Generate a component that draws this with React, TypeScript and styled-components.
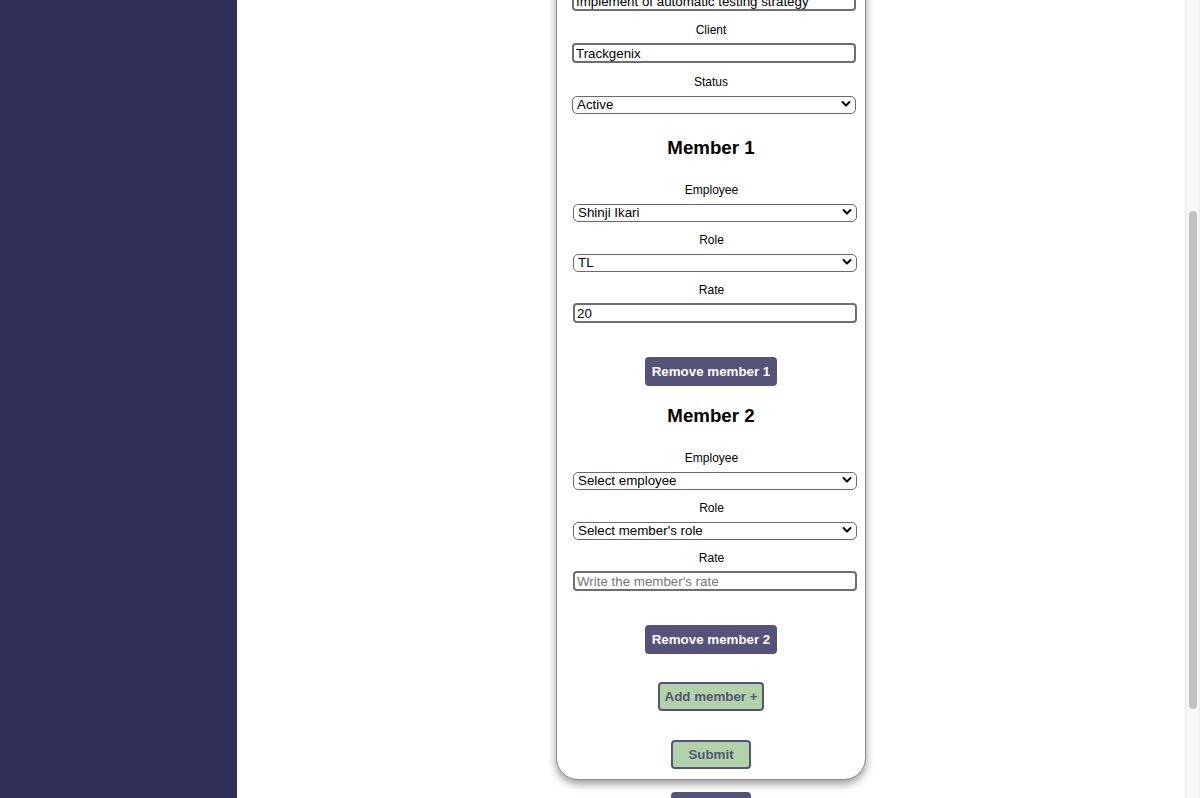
import React from "react";
import styled, { createGlobalStyle } from "styled-components";

const GlobalStyle = createGlobalStyle`
  html, body {
    margin: 0;
    padding: 0;
    height: 100%;
    overflow: hidden;
    font-family: "Liberation Sans", Arial, sans-serif;
  }
  * { box-sizing: border-box; }
`;

const Layout = styled.div`
  display: flex;
  width: 1200px;
  height: 798px;
  overflow: hidden;
  background: #ffffff;
`;

const Sidebar = styled.aside`
  width: 237px;
  flex: 0 0 237px;
  background: #322f58;
`;

const Main = styled.main`
  flex: 1;
  display: flex;
  flex-direction: column;
  align-items: center;
  overflow: hidden;
`;

const Card = styled.form`
  width: 310px;
  margin-top: -42px;
  padding: 12px 15px 10px;
  background: #ffffff;
  border: 1px solid #8c8c8c;
  border-radius: 22px;
  box-shadow: 0 4px 9px rgba(0, 0, 0, 0.4);
  display: flex;
  flex-direction: column;
  align-items: center;
`;

const Field = styled.div<{ $shift?: number }>`
  align-self: stretch;
  display: flex;
  flex-direction: column;
  margin-bottom: 12px;
  padding-left: ${(p) => p.$shift ?? 0}px;
`;

const Label = styled.label`
  display: block;
  text-align: center;
  font-size: 12px;
  line-height: 15px;
  margin-bottom: 5px;
  color: #000;
`;

const TextInput = styled.input`
  appearance: none;
  width: 284px;
  height: 20px;
  padding: 0 2px;
  border: 2px solid #6e6e6e;
  border-radius: 4px;
  font-family: "Liberation Sans", Arial, sans-serif;
  font-size: 13.33px;
  color: #000;
  background: #fff;
  outline: none;
  &::placeholder {
    color: #767676;
  }
`;

const SelectWrap = styled.div`
  position: relative;
  width: 284px;
  height: 18px;
`;

const Select = styled.select`
  appearance: none;
  width: 100%;
  height: 18px;
  padding: 0 20px 0 4px;
  border: 1px solid #6b6b6b;
  border-radius: 5px;
  background: #fff;
  font-family: "Liberation Sans", Arial, sans-serif;
  font-size: 13.33px;
  line-height: 16px;
  color: #000;
  outline: none;
`;

const Chevron = styled.svg`
  position: absolute;
  right: 5px;
  top: 5px;
  width: 10px;
  height: 8px;
  pointer-events: none;
`;

const Heading = styled.h3<{ $mt: number }>`
  margin: ${(p) => p.$mt}px 0 24px;
  font-size: 18.72px;
  line-height: 22px;
  font-weight: 700;
  color: #000;
  text-align: center;
`;

const Section = styled.div`
  align-self: stretch;
  display: flex;
  flex-direction: column;
  align-items: center;
`;

const DarkButton = styled.button<{ $w: number }>`
  width: ${(p) => p.$w}px;
  height: 29px;
  margin: 22px 0 6px;
  padding: 0;
  border: none;
  border-radius: 4px;
  background: #55537a;
  color: #ffffff;
  font-family: "Liberation Sans", Arial, sans-serif;
  font-size: 13.33px;
  font-weight: 700;
`;

const GreenButton = styled.button<{ $w: number; $mt: number }>`
  width: ${(p) => p.$w}px;
  height: 29px;
  margin-top: ${(p) => p.$mt}px;
  padding: 0;
  border: 2px solid #55537a;
  border-radius: 4px;
  background: #b2d3a9;
  color: #55537a;
  font-family: "Liberation Sans", Arial, sans-serif;
  font-size: 13.33px;
  font-weight: 700;
`;

const BackButton = styled.button`
  width: 80px;
  height: 29px;
  margin-top: 12px;
  flex: 0 0 auto;
  border: none;
  border-radius: 4px;
  background: #55537a;
  color: #fff;
  font-family: "Liberation Sans", Arial, sans-serif;
  font-size: 13.33px;
  font-weight: 700;
`;

const Scrollbar = styled.div`
  width: 15px;
  flex: 0 0 15px;
  background: #f8f8f8;
  border-left: 1px solid #e6e6e6;
  border-right: 1px solid #ececec;
  padding: 211px 0 0 3px;
`;

const Thumb = styled.div`
  width: 8px;
  height: 498px;
  border-radius: 4px;
  background: #c1c1c1;
`;

const ChevronIcon = () => (
  <Chevron viewBox="0 0 10 8">
    <polyline points="1.5,2 5,5.5 8.5,2" fill="none" stroke="#000" strokeWidth="2" strokeLinecap="round" strokeLinejoin="round" />
  </Chevron>
);

const SelectField = ({ label, value, options, shift }: { label: string; value: string; options: string[]; shift?: number }) => (
  <Field $shift={shift}>
    <Label>{label}</Label>
    <SelectWrap>
      <Select defaultValue={value}>
        {options.map((o) => (
          <option key={o} value={o}>
            {o}
          </option>
        ))}
      </Select>
      <ChevronIcon />
    </SelectWrap>
  </Field>
);

const InputField = ({ label, value, placeholder, shift }: { label: string; value?: string; placeholder?: string; shift?: number }) => (
  <Field $shift={shift}>
    <Label>{label}</Label>
    <TextInput defaultValue={value} placeholder={placeholder} />
  </Field>
);

type Member = { employee: string; role: string; rate: string };

const members: Member[] = [
  { employee: "Shinji Ikari", role: "TL", rate: "20" },
  { employee: "Select employee", role: "Select member's role", rate: "" },
];

export default function App() {
  return (
    <>
      <GlobalStyle />
      <Layout>
        <Sidebar />
        <Main>
          <Card onSubmit={(e) => e.preventDefault()}>
            <InputField label="Description" value="Implement of automatic testing strategy" />
            <InputField label="Client" value="Trackgenix" />
            <SelectField label="Status" value="Active" options={["Active", "Inactive"]} />
            {members.map((m, i) => (
              <Section key={i}>
                <Heading $mt={i === 0 ? 12 : 13}>Member {i + 1}</Heading>
                <SelectField
                  label="Employee"
                  value={m.employee}
                  options={["Select employee", "Shinji Ikari"]}
                  shift={1}
                />
                <SelectField
                  label="Role"
                  value={m.role}
                  options={["Select member's role", "TL", "DEV", "QA", "PM"]}
                  shift={1}
                />
                <InputField
                  label="Rate"
                  value={m.rate || undefined}
                  placeholder="Write the member's rate"
                  shift={1}
                />
                <DarkButton type="button" $w={132}>
                  Remove member {i + 1}
                </DarkButton>
              </Section>
            ))}
            <GreenButton type="button" $w={106} $mt={22}>
              Add member +
            </GreenButton>
            <GreenButton type="submit" $w={80} $mt={29}>
              Submit
            </GreenButton>
          </Card>
          <BackButton type="button">Cancel</BackButton>
        </Main>
        <Scrollbar>
          <Thumb />
        </Scrollbar>
      </Layout>
    </>
  );
}
